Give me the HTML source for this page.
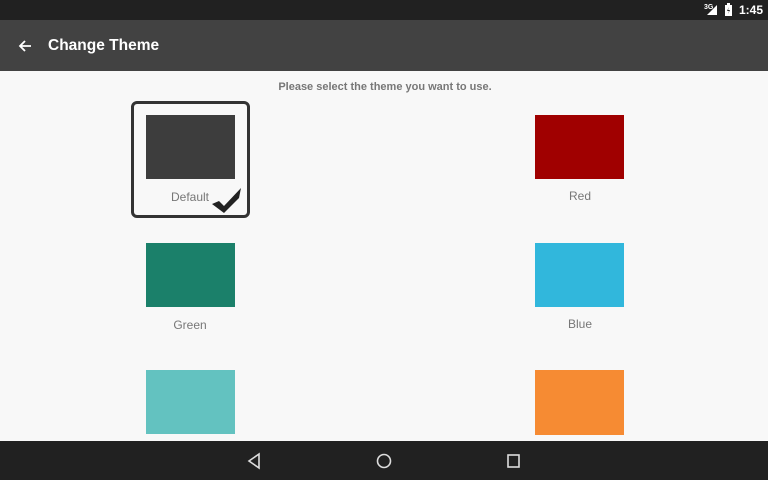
<!DOCTYPE html>
<html><head><style>
*{margin:0;padding:0;box-sizing:border-box}
body{width:768px;height:480px;overflow:hidden;background:#f8f8f8;font-family:"Liberation Sans",sans-serif;position:relative}
.abs{position:absolute}
.sw{position:absolute;width:89px;height:64px}
.lbl{position:absolute;width:120px;text-align:center;font-size:12px;color:#777}
</style></head><body>
<div class="abs" style="left:0;top:0;width:768px;height:20px;background:#212121"></div>
<div class="abs" style="left:704px;top:4px;font-size:7px;color:#fff;font-weight:bold">3G</div>
<svg class="abs" style="left:706px;top:4px" width="12" height="12"><polygon points="11,1 11,11 1,11" fill="#fff"/></svg>
<svg class="abs" style="left:724px;top:3px" width="9" height="13"><rect x="1" y="2" width="7" height="11" fill="#fff"/><rect x="3" y="0" width="3" height="2" fill="#fff"/><path d="M5 4 L3 8 H5 L4 11 L6 7 H4z" fill="#212121"/></svg>
<div class="abs" style="left:739px;top:3px;font-size:12px;color:#fff;font-weight:bold">1:45</div>
<div class="abs" style="left:0;top:20px;width:768px;height:51px;background:#424242"></div>
<svg class="abs" style="left:17px;top:38px" width="16" height="16"><path d="M14 8 H3 M8 3 L3 8 L8 13" stroke="#fff" stroke-width="1.8" fill="none"/></svg>
<div class="abs" style="left:48px;top:37px;font-size:15.5px;color:#fff;font-weight:bold">Change Theme</div>
<div class="abs" style="left:0;top:81px;width:770px;text-align:center;font-size:11px;color:#777;font-weight:bold">Please select the theme you want to use.</div>
<div class="abs" style="left:131px;top:101px;width:119px;height:117px;border:3px solid #333;border-radius:6px"></div>
<div class="sw" style="left:146px;top:115px;background:#3d3d3d"></div>
<div class="lbl" style="left:130px;top:190px">Default</div>
<svg class="abs" style="left:211px;top:187px" width="32" height="27"><path d="M1 17 L8 14 L13 19 L30 1 L28 11 L13 26 Z" fill="#222"/></svg>
<div class="sw" style="left:535px;top:115px;background:#a00000"></div>
<div class="lbl" style="left:520px;top:189px">Red</div>
<div class="sw" style="left:146px;top:243px;background:#1b806a"></div>
<div class="lbl" style="left:130px;top:318px">Green</div>
<div class="sw" style="left:535px;top:243px;background:#31b7dc"></div>
<div class="lbl" style="left:520px;top:317px">Blue</div>
<div class="sw" style="left:146px;top:370px;background:#63c2c0"></div>
<div class="sw" style="left:535px;top:370px;height:65px;background:#f68b33"></div>
<div class="abs" style="left:0;top:441px;width:768px;height:39px;background:#212121"></div>
<svg class="abs" style="left:246px;top:452px" width="16" height="18"><path d="M13 2 L3 9 L13 16 Z" stroke="#ddd" stroke-width="1.6" fill="none"/></svg>
<svg class="abs" style="left:375px;top:452px" width="18" height="18"><circle cx="9" cy="9" r="6.5" stroke="#ddd" stroke-width="1.6" fill="none"/></svg>
<svg class="abs" style="left:506px;top:453px" width="16" height="16"><rect x="2" y="2" width="11" height="12" stroke="#ddd" stroke-width="1.6" fill="none"/></svg>
</body></html>
